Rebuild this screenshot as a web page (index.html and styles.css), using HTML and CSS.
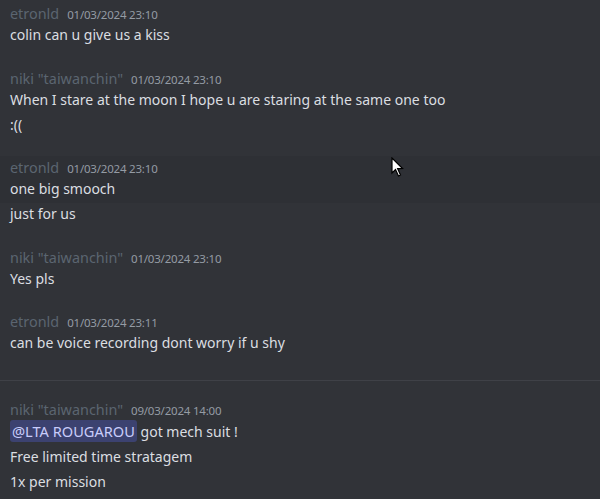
FILE: index.html
```html
<!DOCTYPE html>
<html>
<head>
<meta charset="utf-8">
<link rel="stylesheet" href="styles.css">
</head>
<body>
<div class="chat">
  <div class="group">
    <div class="msg head">
      <div class="meta"><span class="name">etronld</span><span class="time">01/03/2024 23:10</span></div>
      <div class="text">colin can u give us a kiss</div>
    </div>
  </div>
  <div class="group">
    <div class="msg head">
      <div class="meta"><span class="name">niki "taiwanchin"</span><span class="time">01/03/2024 23:10</span></div>
      <div class="text">When I stare at the moon I hope u are staring at the same one too</div>
    </div>
    <div class="msg follow"><div class="text">:((</div></div>
  </div>
  <div class="group">
    <div class="msg head hover">
      <div class="meta"><span class="name">etronld</span><span class="time">01/03/2024 23:10</span></div>
      <div class="text">one big smooch</div>
    </div>
    <div class="msg follow"><div class="text">just for us</div></div>
  </div>
  <div class="group">
    <div class="msg head">
      <div class="meta"><span class="name">niki "taiwanchin"</span><span class="time">01/03/2024 23:10</span></div>
      <div class="text">Yes pls</div>
    </div>
  </div>
  <div class="group">
    <div class="msg head">
      <div class="meta"><span class="name">etronld</span><span class="time">01/03/2024 23:11</span></div>
      <div class="text">can be voice recording dont worry if u shy</div>
    </div>
  </div>
  <div class="divider"></div>
  <div class="group after-divider">
    <div class="msg head">
      <div class="meta"><span class="name">niki "taiwanchin"</span><span class="time">09/03/2024 14:00</span></div>
      <div class="text"><span class="mention">@LTA ROUGAROU</span> got mech suit !</div>
    </div>
    <div class="msg follow"><div class="text">Free limited time stratagem</div></div>
    <div class="msg follow"><div class="text">1x per mission</div></div>
  </div>
</div>
<svg class="cursor" width="14" height="22" viewBox="0 0 14 22">
  <path d="M1 1 L1 16 L4.5 12.5 L7.5 19 L9.5 18 L6.6 11.6 L11.5 11.5 Z" fill="#ffffff" stroke="#000000" stroke-width="1.2" stroke-linejoin="miter"/>
</svg>
</body>
</html>
```

FILE: styles.css
```css
html, body {
  margin: 0;
  padding: 0;
  background: #313338;
  width: 600px;
  height: 499px;
  overflow: hidden;
}
body {
  font-family: "Noto Sans", "Open Sans", sans-serif;
  position: relative;
}
.chat {
  display: flex;
  flex-direction: column;
  padding-top: 2px;
}
.group + .group {
  margin-top: 17.5px;
}
.msg {
  padding-left: 10px;
}
.msg.head {
  padding-top: 2px;
  padding-bottom: 3px;
}
.msg.hover {
  background: #2e3035;
}
.msg.follow {
  padding-bottom: 3px;
}
.meta {
  height: 20px;
  line-height: 20px;
  display: flex;
  align-items: baseline;
  white-space: nowrap;
}
.name {
  font-size: 14.4px;
  color: #5b6570;
}
.time {
  font-size: 11.5px;
  color: #949ba4;
  margin-left: 8px;
  letter-spacing: -0.2px;
}
.text {
  font-size: 14px;
  line-height: 22px;
  color: #dbdee1;
  white-space: nowrap;
}
.mention {
  background: #3c4270;
  color: #c9cdfb;
  border-radius: 3px;
  padding: 1px 2px;
  font-size: 14.6px;
}
.divider {
  height: 1px;
  background: #3f4147;
  margin-top: 23px;
  margin-bottom: 17px;
}
.group.after-divider {
  margin-top: 0;
}
.cursor {
  position: absolute;
  left: 391px;
  top: 157px;
}
```
